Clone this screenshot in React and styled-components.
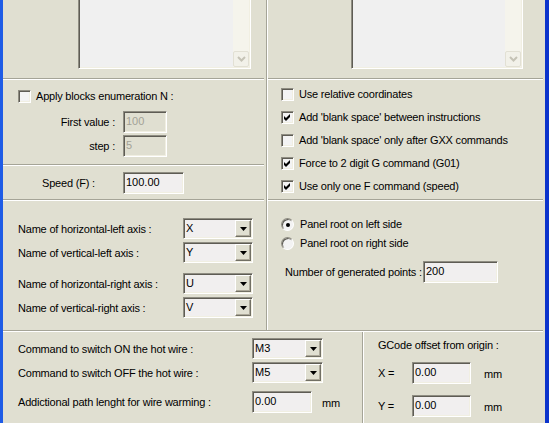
import styled, { createGlobalStyle } from 'styled-components';

const PANEL = '#E0DFD1';
const ETCH = '#A5A497';
const SUNKEN_OUT = '#8F8D82';
const SUNKEN_IN = '#5E5C54';
const FIELD_BG = '#F1EFEF';

const GlobalStyle = createGlobalStyle`
  html, body {
    margin: 0;
    padding: 0;
    background: ${PANEL};
    overflow: hidden;
  }
  body {
    font-family: "Liberation Sans", Arial, sans-serif;
    font-size: 11px;
    letter-spacing: -0.2px;
    color: #000;
  }
`;

const Window = styled.div`
  width: 549px;
  height: 423px;
  box-sizing: border-box;
  display: flex;
  flex-direction: column;
  background: ${PANEL};
  border-left: 3px solid #1F5CE6;
  border-right: 4px solid #0B33CC;
  overflow: hidden;
`;

const Row = styled.div`
  display: flex;
  flex: ${(p) => (p.$h ? `0 0 ${p.$h}px` : '1')};
`;

const Cell = styled.div`
  display: flex;
  flex-direction: column;
  box-sizing: border-box;
  flex: ${(p) => (p.$w ? `0 0 ${p.$w}px` : '1')};
`;

const Section = styled.div`
  display: flex;
  flex-direction: column;
  box-sizing: border-box;
  height: ${(p) => (p.$h ? `${p.$h}px` : 'auto')};
  padding: ${(p) => p.$pt || 0}px 0 0 ${(p) => p.$pl || 0}px;
`;

const VLine = styled.div`
  flex: 0 0 1px;
  background: ${ETCH};
  border-right: 1px solid #fff;
`;

const HRule = styled.div`
  flex: 0 0 1px;
  height: 1px;
  background: ${ETCH};
  border-bottom: 1px solid #fff;
  margin-right: ${(p) => p.$mr || 0}px;
  margin-top: ${(p) => (p.$auto ? 'auto' : '0')};
`;

const TextBox = styled.div`
  margin-left: ${(p) => p.$ml}px;
  width: ${(p) => p.$w}px;
  height: 69px;
  box-sizing: border-box;
  border-left: 1px solid ${SUNKEN_OUT};
  border-right: 1px solid #fff;
  border-bottom: 1px solid #fff;
  box-shadow: inset 1px 0 ${SUNKEN_IN}, inset -1px 0 #F1EFE2, inset 0 -1px #F1EFE2;
  background: #F0F0F0;
  display: flex;
  justify-content: flex-end;
`;

const ScrollTrack = styled.div`
  width: 16px;
  margin: 0 1px 1px 0;
  background: #F5F4EC;
  display: flex;
  flex-direction: column;
  justify-content: flex-end;
`;

const ScrollBtn = styled.div`
  height: 16px;
  box-sizing: border-box;
  border: 1px solid #E2E0D4;
  border-radius: 2px;
  background: #F2F1E9;
  display: flex;
  align-items: center;
  justify-content: center;
`;

const Line = styled.div`
  display: flex;
  align-items: center;
  height: ${(p) => p.$h}px;
  margin-top: ${(p) => p.$mt || 0}px;
  padding-left: ${(p) => p.$pl || 0}px;
`;

const Label = styled.span`
  white-space: nowrap;
  line-height: 13px;
  width: ${(p) => (p.$w ? `${p.$w}px` : 'auto')};
  flex: 0 0 auto;
  text-align: ${(p) => p.$align || 'left'};
  margin-right: ${(p) => p.$mr || 0}px;
  padding-top: ${(p) => p.$dy || 0}px;
`;

const Box = styled.span`
  width: 13px;
  height: 13px;
  box-sizing: border-box;
  flex: 0 0 auto;
  border: 1px solid;
  border-color: ${SUNKEN_OUT} #fff #fff ${SUNKEN_OUT};
  box-shadow: inset 1px 1px ${SUNKEN_IN}, inset -1px -1px #F1EFE2;
  background: #F3F3F3;
  display: flex;
  align-items: center;
  justify-content: center;
  margin-right: 5px;
`;

const Round = styled.span`
  width: 13px;
  height: 13px;
  box-sizing: border-box;
  flex: 0 0 auto;
  border-radius: 50%;
  border: 1px solid;
  border-color: ${SUNKEN_OUT} #fff #fff ${SUNKEN_OUT};
  box-shadow: inset 1px 1px ${SUNKEN_IN};
  background: #F3F3F3;
  display: flex;
  align-items: center;
  justify-content: center;
  margin-right: 6px;
  &::after {
    content: '';
    width: 4px;
    height: 4px;
    border-radius: 50%;
    background: ${(p) => (p.$on ? '#000' : 'transparent')};
  }
`;

const Field = styled.div`
  width: ${(p) => p.$w}px;
  height: 22px;
  box-sizing: border-box;
  flex: 0 0 auto;
  border: 1px solid;
  border-color: ${SUNKEN_OUT} #fff #fff ${SUNKEN_OUT};
  box-shadow: inset 1px 1px ${SUNKEN_IN}, inset -1px -1px #F1EFE2;
  background: ${(p) => (p.$disabled ? PANEL : FIELD_BG)};
  color: ${(p) => (p.$disabled ? '#A3A296' : '#000')};
  display: flex;
  align-items: center;
  padding: 0 0 1px 2px;
  line-height: 13px;
  letter-spacing: 0;
`;

const Combo = styled.div`
  width: ${(p) => p.$w}px;
  height: 21px;
  box-sizing: border-box;
  flex: 0 0 auto;
  display: flex;
  border: 1px solid;
  border-color: ${SUNKEN_OUT} #fff #fff ${SUNKEN_OUT};
  box-shadow: inset 1px 1px ${SUNKEN_IN}, inset -1px -1px #F1EFE2;
  background: ${FIELD_BG};
`;

const ComboText = styled.span`
  flex: 1;
  display: flex;
  align-items: center;
  padding-left: 2px;
  line-height: 13px;
  letter-spacing: 0;
`;

const ComboBtn = styled.span`
  width: 16px;
  margin: 1px 1px 1px 0;
  box-sizing: border-box;
  background: ${PANEL};
  border: 1px solid;
  border-color: #fff #716F64 #716F64 #fff;
  box-shadow: inset -1px -1px #ACA899;
  display: flex;
  align-items: center;
  justify-content: center;
`;

const Unit = styled.span`
  margin-left: ${(p) => p.$ml}px;
  padding-top: 2px;
`;

const Check = ({ on }) => (
  <Box>
    {on && (
      <svg width="7" height="7" viewBox="0 0 7 7">
        <polygon points="0,2 2,4 6,0 6,3 2,7 0,5" fill="#000" />
      </svg>
    )}
  </Box>
);

const Arrow = () => (
  <svg width="7" height="4" viewBox="0 0 7 4">
    <polygon points="0,0 7,0 3.5,4" fill="#000" />
  </svg>
);

const DropDown = ({ value, w = 70 }) => (
  <Combo $w={w}>
    <ComboText>{value}</ComboText>
    <ComboBtn>
      <Arrow />
    </ComboBtn>
  </Combo>
);

const MemoBox = ({ ml, w }) => (
  <TextBox $ml={ml} $w={w}>
    <ScrollTrack>
      <ScrollBtn>
        <svg width="9" height="6" viewBox="0 0 9 6">
          <polyline points="1,1 4.5,4.5 8,1" fill="none" stroke="#C5C3B6" strokeWidth="2" />
        </svg>
      </ScrollBtn>
    </ScrollTrack>
  </TextBox>
);

const options = [
  ['Use relative coordinates', false],
  ["Add 'blank space' between instructions", true],
  ["Add 'blank space' only after GXX commands", false],
  ['Force to 2 digit G command (G01)', true],
  ['Use only one F command (speed)', true],
];

const axes = [
  ['Name of horizontal-left axis :', 'X', 0],
  ['Name of vertical-left axis :', 'Y', 3],
  ['Name of horizontal-right axis :', 'U', 10],
  ['Name of vertical-right axis :', 'V', 3],
];

export default function App() {
  return (
    <>
      <GlobalStyle />
      <Window>
        <Row $h={80}>
          <Cell $w={263}>
            <MemoBox ml={75} w={173} />
            <HRule $auto $mr={2} />
          </Cell>
          <VLine />
          <Cell>
            <MemoBox ml={83} w={172} />
            <HRule $auto $mr={2} />
          </Cell>
        </Row>

        <Row $h={121}>
          <Cell $w={263}>
            <Section $h={84} $pt={10} $pl={15}>
              <Line $h={13}>
                <Check />
                <Label>Apply blocks enumeration N :</Label>
              </Line>
              <Line $h={22} $mt={8}>
                <Label $w={97} $mr={8} $align="right">First value :</Label>
                <Field $w={44} $disabled>100</Field>
              </Line>
              <Line $h={22} $mt={2}>
                <Label $w={97} $mr={8} $align="right">step :</Label>
                <Field $w={44} $disabled>5</Field>
              </Line>
            </Section>
            <HRule $mr={2} />
            <Section $h={33} $pt={6} $pl={39}>
              <Line $h={22}>
                <Label $w={81}>Speed (F) :</Label>
                <Field $w={61}>100.00</Field>
              </Line>
            </Section>
            <HRule $mr={2} />
          </Cell>
          <VLine />
          <Cell>
            <Section $pt={3} $pl={13}>
              {options.map(([text, on]) => (
                <Line $h={23} key={text}>
                  <Check on={on} />
                  <Label>{text}</Label>
                </Line>
              ))}
            </Section>
            <HRule $auto $mr={2} />
          </Cell>
        </Row>

        <Row $h={129}>
          <Cell $w={263}>
            <Section $pt={17} $pl={15}>
              {axes.map(([text, val, mt]) => (
                <Line $h={21} $mt={mt} key={text}>
                  <Label $w={165} $dy={2}>{text}</Label>
                  <DropDown value={val} />
                </Line>
              ))}
            </Section>
          </Cell>
          <VLine />
          <Cell>
            <Section $pt={14} $pl={13}>
              <Line $h={19}>
                <Round $on />
                <Label>Panel root on left side</Label>
              </Line>
              <Line $h={19}>
                <Round />
                <Label>Panel root on right side</Label>
              </Line>
              <Line $h={22} $mt={8} $pl={4}>
                <Label $w={138}>Number of generated points :</Label>
                <Field $w={75}>200</Field>
              </Line>
            </Section>
          </Cell>
        </Row>

        <HRule $mr={2} />

        <Row>
          <Cell $w={359}>
            <Section $pt={6} $pl={15}>
              <Line $h={21}>
                <Label $w={234} $dy={2}>Command to switch ON the hot wire :</Label>
                <DropDown value="M3" w={71} />
              </Line>
              <Line $h={21} $mt={3}>
                <Label $w={234} $dy={2}>Command to switch OFF the hot wire :</Label>
                <DropDown value="M5" w={71} />
              </Line>
              <Line $h={22} $mt={8}>
                <Label $w={234}>Addictional path lenght for wire warming :</Label>
                <Field $w={60}>0.00</Field>
                <Unit $ml={10}>mm</Unit>
              </Line>
            </Section>
          </Cell>
          <VLine />
          <Cell>
            <Section $pt={6} $pl={14}>
              <Line $h={14}>
                <Label>GCode offset from origin :</Label>
              </Line>
              <Line $h={22} $mt={10}>
                <Label $w={34}>X =</Label>
                <Field $w={59}>0.00</Field>
                <Unit $ml={13}>mm</Unit>
              </Line>
              <Line $h={22} $mt={11}>
                <Label $w={34}>Y =</Label>
                <Field $w={59}>0.00</Field>
                <Unit $ml={13}>mm</Unit>
              </Line>
            </Section>
          </Cell>
        </Row>
      </Window>
    </>
  );
}
